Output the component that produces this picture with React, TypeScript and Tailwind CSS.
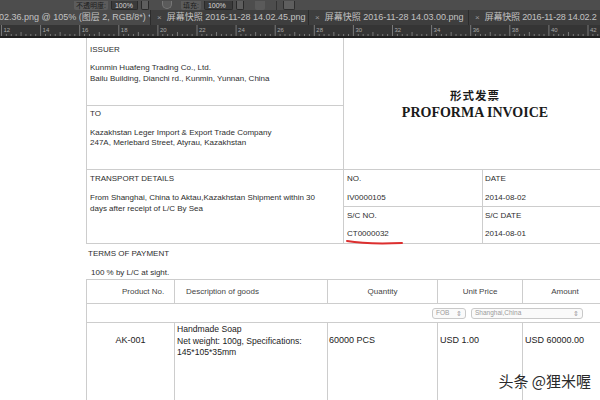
const rulerNums = [12, 14, 16, 18, 20, 22, 24, 26, 28, 30, 32, 34, 36, 38, 40, 42];

function OptionsBar() {
  return (
    <div className="flex h-[10px] shrink-0 items-end gap-[3px] overflow-hidden bg-[#4d4d4d] pl-[74px] text-[7px] leading-[9px] text-[#1c1c1c]">
      <div className="h-[9px] rounded-b-[2px] bg-[#5c5c5c] px-[2px]">不透明度:</div>
      <div className="h-[9px] w-[27px] rounded-b-[2px] border-x border-b border-[#2a2a2a] bg-[#3b3b3b] pl-[3px] text-[#d8d8d8]">100%</div>
      <div className="h-[9px] w-[8px] rounded-b-[2px] border-x border-b border-[#2a2a2a] bg-[#5e5e5e]" />
      <div className="ml-[10px] mb-[1px] h-[8px] w-[10px] rounded-b-full border-x border-b border-[#777] bg-[#5b5b5b]" />
      <div className="ml-[6px] h-[9px] rounded-b-[2px] bg-[#5c5c5c] px-[2px]">填充:</div>
      <div className="h-[9px] w-[29px] rounded-b-[2px] border-x border-b border-[#2a2a2a] bg-[#3b3b3b] pl-[3px] text-[#d8d8d8]">100%</div>
      <div className="h-[9px] w-[8px] rounded-b-[2px] border-x border-b border-[#2a2a2a] bg-[#5e5e5e]" />
      <div className="ml-[8px] h-[9px] w-[10px] rounded-b-[2px] bg-[#5a5a5a]" />
      <div className="ml-[8px] h-[9px] w-[1px] bg-[#333]" />
      <div className="ml-[3px] h-[9px] w-[12px] rounded-b-[2px] border-x border-b border-[#2e2e2e] bg-[#5e5e5e]" />
    </div>
  );
}

function Tab({ label, width }: { label: string; width: number }) {
  return (
    <div
      className="flex h-full shrink-0 items-center gap-[5px] overflow-hidden whitespace-nowrap border-r border-[#2c2c2c] bg-[#3e3e3e] pl-[6px]"
      style={{ width }}
    >
      <span className="text-[8px] text-[#9a9a9a]">×</span>
      <span>{label}</span>
    </div>
  );
}

function TabBar() {
  return (
    <div className="flex h-[15px] shrink-0 items-center overflow-hidden bg-[#3e3e3e] text-[9px] text-[#c2c2c2]">
      <div className="flex h-full w-[151px] shrink-0 items-center overflow-hidden whitespace-nowrap border-r border-[#2c2c2c] bg-[#4a4a4a]">
        <span className="ml-[-1px]">02.36.png @ 105% (图层 2, RGB/8*) *</span>
      </div>
      <Tab label="屏幕快照 2016-11-28 14.02.45.png" width={158} />
      <Tab label="屏幕快照 2016-11-28 14.03.00.png" width={160} />
      <div className="flex h-full min-w-0 flex-1 items-center gap-[5px] whitespace-nowrap pl-[6px]">
        <span className="text-[8px] text-[#9a9a9a]">×</span>
        <span className="tracking-[-0.2px]">屏幕快照 2016-11-28 14.02.2</span>
      </div>
    </div>
  );
}

function Ruler() {
  const step = 39.1;
  const ticks: JSX.Element[] = [];
  for (let i = -1; i < 17; i++) {
    const x0 = 1.5 + i * step;
    for (let j = 0; j < 8; j++) {
      const x = x0 + (j * step) / 8;
      const h = j === 0 ? 11 : j === 4 ? 4 : 2;
      ticks.push(<line key={`${i}-${j}`} x1={x} x2={x} y1={11 - h} y2={11} stroke="#8a8a8a" strokeWidth={0.8} />);
    }
  }
  return (
    <div className="h-[11px] shrink-0 bg-[#353535]">
      <svg width={600} height={11} className="block">
        {ticks}
        {rulerNums.map((n, i) => (
          <text key={n} x={3.5 + i * step} y={7} fontSize={6} fill="#a8a8a8" fontFamily="Liberation Sans, sans-serif">
            {n}
          </text>
        ))}
      </svg>
    </div>
  );
}

function Select({ label, width }: { label: string; width: number }) {
  return (
    <div
      className="flex h-[11px] items-center justify-between rounded-[3px] border border-[#c9c9c9] bg-[#fafafa] px-[3px] text-[6.5px] leading-none text-[#9a9a9a]"
      style={{ width }}
    >
      <span>{label}</span>
      <span className="text-[7px]">⇕</span>
    </div>
  );
}

function Document() {
  const line = "border-[#cdcdcd]";
  return (
    <div className="flex min-h-0 flex-1 bg-white text-[8px] leading-[10px] text-[#2e2e2e]">
      <div className="w-[86px] shrink-0" />
      <div className="relative min-w-0 flex-1 overflow-hidden">
        {/* issuer / to / title */}
        <div className={`flex h-[132px] border-b border-l ${line}`}>
          <div className={`flex w-[257px] shrink-0 flex-col border-r ${line}`}>
            <div className={`h-[68px] border-b pl-[3px] pt-[7px] ${line}`}>
              <div>ISSUER</div>
              <div className="mt-[7px] leading-[11px]">
                <div>Kunmin Huafeng Trading Co., Ltd.</div>
                <div>Bailu Building, Dianchi rd., Kunmin, Yunnan, China</div>
              </div>
            </div>
            <div className="flex-1 pl-[3px] pt-[3px]">
              <div>TO</div>
              <div className="mt-[9px] leading-[10px]">
                <div>Kazakhstan Leger Import &amp; Export Trade Company</div>
                <div>247A, Merlebard Street, Atyrau, Kazakhstan</div>
              </div>
            </div>
          </div>
          <div className="flex min-w-0 flex-1 flex-col items-center justify-center pl-[6px] pt-[3px] text-[#1a1a1a]">
            <div className="font-['Noto_Sans_CJK_SC',sans-serif] text-[11.5px] font-bold leading-[13px] tracking-[1px]">形式发票</div>
            <div className="mt-[3px] whitespace-nowrap font-['Liberation_Serif','Times_New_Roman',serif] text-[14px] font-bold leading-[16px]">
              PROFORMA INVOICE
            </div>
          </div>
        </div>

        {/* transport / numbers */}
        <div className={`flex h-[74px] border-b border-l ${line}`}>
          <div className={`w-[257px] shrink-0 border-r pl-[3px] pt-[4px] ${line}`}>
            <div>TRANSPORT DETAILS</div>
            <div className="mt-[9px] leading-[10.5px]">
              <div className="whitespace-nowrap">From Shanghai, China to Aktau,Kazakhstan Shipment within 30</div>
              <div>days after receipt of L/C By Sea</div>
            </div>
          </div>
          <div className="grid min-w-0 flex-1 grid-cols-[139px_1fr] grid-rows-[37px_1fr]">
            <div className={`border-b border-r pl-[3px] pt-[4px] ${line}`}>
              <div>NO.</div>
              <div className="mt-[9px]">IV0000105</div>
            </div>
            <div className={`border-b pl-[2px] pt-[4px] ${line}`}>
              <div>DATE</div>
              <div className="mt-[9px]">2014-08-02</div>
            </div>
            <div className={`relative border-r pl-[3px] pt-[4px] ${line}`}>
              <div>S/C NO.</div>
              <div className="mt-[8px]">CT0000032</div>
              <svg className="absolute left-[1px] top-[32px]" width={60} height={7}>
                <path d="M2 2 Q 22 5.5 57 4" stroke="#dc2f2f" strokeWidth={2} fill="none" strokeLinecap="round" />
              </svg>
            </div>
            <div className="pl-[2px] pt-[4px]">
              <div>S/C DATE</div>
              <div className="mt-[8px]">2014-08-01</div>
            </div>
          </div>
        </div>

        {/* terms */}
        <div className="h-[35px] pt-[5px]">
          <div className="pl-[2px]">TERMS OF PAYMENT</div>
          <div className="mt-[9px] pl-[5px]">100 % by L/C at sight.</div>
        </div>

        {/* goods table */}
        <div className={`flex h-[200px] flex-col border-l border-t ${line}`}>
          <div className={`flex h-[24px] shrink-0 items-center border-b text-[#444] ${line}`}>
            <div className={`h-full w-[88px] shrink-0 border-r pl-[35px] leading-[24px] ${line}`}>Product No.</div>
            <div className={`h-full w-[153px] shrink-0 border-r pl-[11px] leading-[24px] ${line}`}>Description of goods</div>
            <div className={`h-full w-[110px] shrink-0 border-r text-center leading-[24px] ${line}`}>Quantity</div>
            <div className={`h-full w-[85px] shrink-0 border-r text-center leading-[24px] ${line}`}>Unit Price</div>
            <div className="h-full w-[84px] shrink-0 text-center leading-[24px]">Amount</div>
          </div>
          <div className={`flex h-[19px] shrink-0 items-center gap-[5px] border-b pl-[345px] ${line}`}>
            <Select label="FOB" width={34} />
            <Select label="Shanghai,China" width={112} />
          </div>
          <div className="flex flex-1 text-[9px] leading-[11.5px] text-[#222]">
            <div className={`w-[88px] shrink-0 border-r pt-[12px] text-center ${line}`}>AK-001</div>
            <div className={`w-[153px] shrink-0 whitespace-nowrap border-r pl-[2px] pt-[1px] text-[8.6px] ${line}`}>
              <div>Handmade Soap</div>
              <div>Net weight: 100g, Specifications:</div>
              <div>145*105*35mm</div>
            </div>
            <div className={`w-[110px] shrink-0 border-r pl-[1px] pt-[12px] ${line}`}>60000 PCS</div>
            <div className={`w-[85px] shrink-0 border-r pl-[2px] pt-[12px] ${line}`}>USD 1.00</div>
            <div className="w-[84px] shrink-0 whitespace-nowrap pl-[2px] pt-[12px]">USD 60000.00</div>
          </div>
        </div>

        <div className="absolute bottom-[11px] right-[9px] whitespace-nowrap font-['Noto_Sans_CJK_SC',sans-serif] text-[15px] leading-[16px] text-[#2a2a2a] [text-shadow:0_0_1px_#fff]">
          头条 @狸米喔
        </div>
      </div>
    </div>
  );
}

export default function App() {
  return (
    <div className="flex h-[400px] w-[600px] flex-col overflow-hidden bg-white font-['Liberation_Sans','Noto_Sans_CJK_SC',sans-serif]">
      <OptionsBar />
      <TabBar />
      <Ruler />
      <div className="h-[2px] shrink-0 bg-[#1f1f1f]" />
      <Document />
    </div>
  );
}
